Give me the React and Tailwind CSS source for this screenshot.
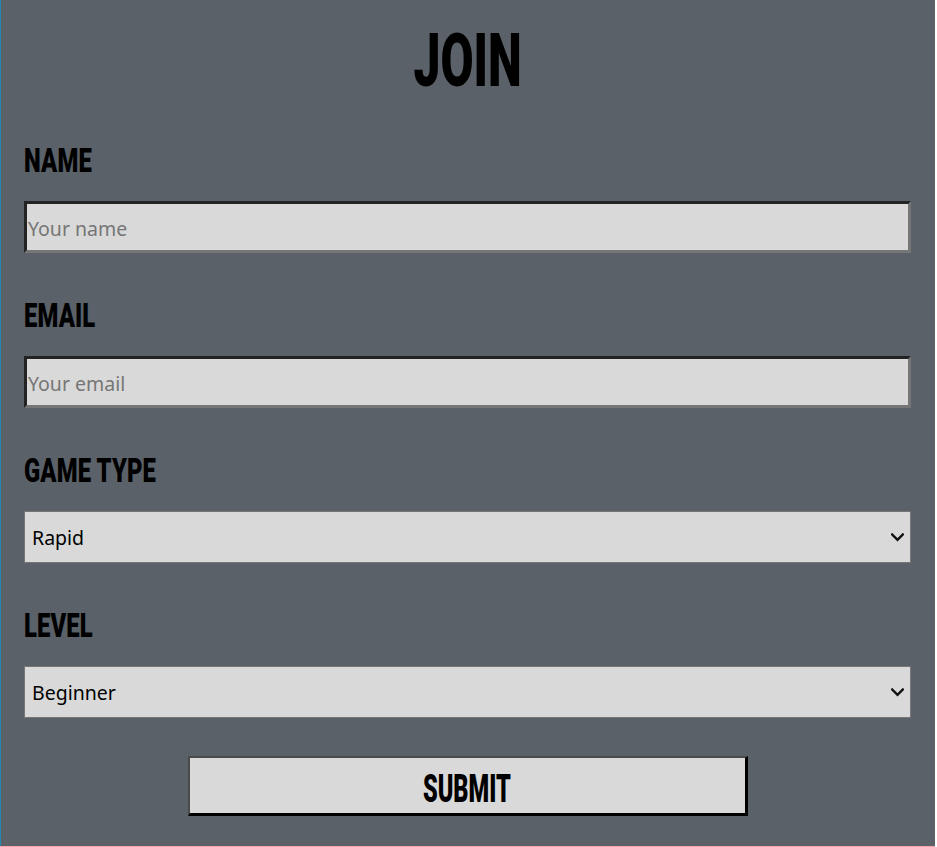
import React from "react";

const headFont = {
  fontFamily: 'Roboto, "DejaVu Sans", sans-serif',
};

function Label({ children, className = "" }) {
  return (
    <div className={"h-[33px] text-[34px] leading-[33px] font-black text-black " + className} style={headFont}>
      <span className="inline-block origin-left scale-x-[0.70] whitespace-nowrap tracking-[0.2px]">{children}</span>
    </div>
  );
}

const inputCls =
  "block w-full h-[52px] bg-[#d9d9d9] border-[3px] border-t-[#232323] border-l-[#232323] border-r-[#767676] border-b-[#767676] pl-px pt-[2px] text-[19.5px] text-black placeholder:text-[#767676] outline-none [font-family:'Noto_Sans',sans-serif]";

const selectCls =
  "block w-full h-[52px] appearance-none bg-[#d9d9d9] border border-[#767676] pl-[7px] pt-[1px] text-[19.5px] text-black outline-none [font-family:'Noto_Sans',sans-serif]";

function Select({ value, options, className = "" }) {
  return (
    <div className={"relative " + className}>
      <select className={selectCls} defaultValue={value}>
        {options.map((o) => (
          <option key={o}>{o}</option>
        ))}
      </select>
      <svg
        className="pointer-events-none absolute right-[7px] top-[22px]"
        width="13"
        height="9"
        viewBox="0 0 13 9"
        fill="none"
      >
        <path d="M1.2 1.5 L6.5 6.8 L11.8 1.5" stroke="#111" strokeWidth="2.4" strokeLinecap="square" />
      </svg>
    </div>
  );
}

export default function App() {
  return (
    <div className="min-h-screen bg-white">
      <div className="w-[935px] h-[846px] bg-[#5a6168] border-l border-[#2487b3] pl-[23px] pr-6 flex flex-col">
        <div className="mt-[24px] h-[73px] flex justify-center text-[75px] leading-[73px] font-black text-black" style={headFont}>
          <span className="inline-block scale-x-[0.64]">JOIN</span>
        </div>

        <Label className="mt-[47px]">NAME</Label>
        <input className={inputCls + " mt-6"} placeholder="Your name" />

        <Label className="mt-[46px]">EMAIL</Label>
        <input className={inputCls + " mt-6"} placeholder="Your email" />

        <Label className="mt-[46px]">GAME TYPE</Label>
        <Select className="mt-6" value="Rapid" options={["Rapid", "Blitz", "Classical"]} />

        <Label className="mt-[46px]">LEVEL</Label>
        <Select className="mt-6" value="Beginner" options={["Beginner", "Intermediate", "Advanced"]} />

        <button
          type="button"
          className="mt-[38px] mx-auto w-[560px] h-[60px] pt-[6px] bg-[#d9d9d9] border-t-2 border-l-2 border-r-[3px] border-b-[3px] border-t-[#4a4a4a] border-l-[#4a4a4a] border-r-black border-b-black text-[38px] leading-none font-black text-black"
          style={headFont}
        >
          <span className="inline-block scale-x-[0.62]">SUBMIT</span>
        </button>
      </div>
      <div className="w-[935px] h-px bg-[#f2a6a6]" />
    </div>
  );
}
